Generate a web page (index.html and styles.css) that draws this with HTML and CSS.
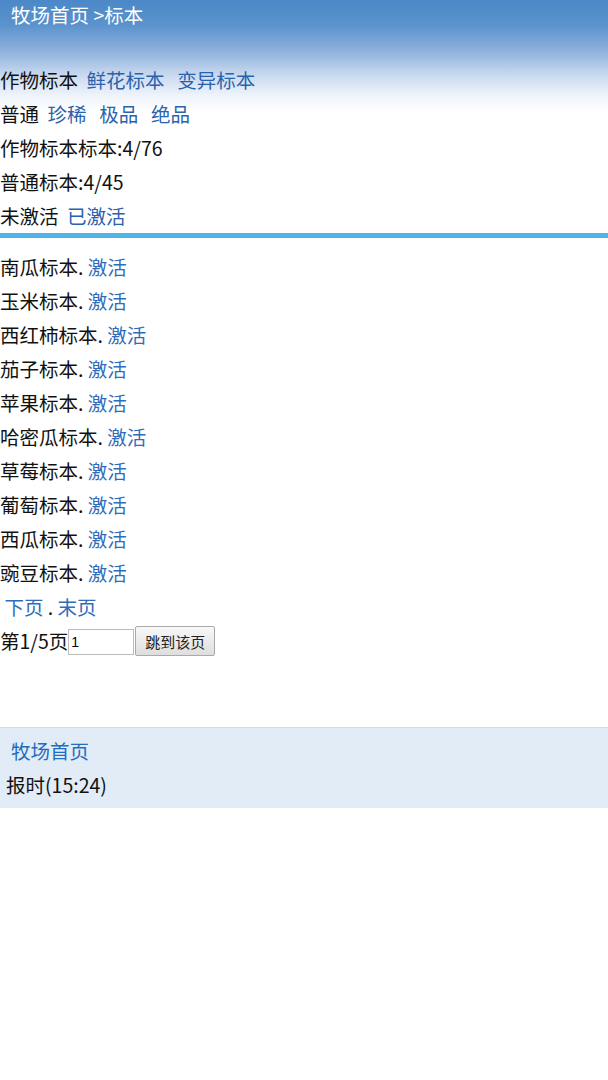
FILE: index.html
```html
<!DOCTYPE html>
<html lang="zh-CN">
<head>
    <meta charset="UTF-8">
    <meta name="viewport" content="width=device-width, initial-scale=1.0">
    <title>标本</title>
    <link rel="stylesheet" href="styles.css">
</head>
<body>
    <div class="top">
        <div class="crumb"><a href="#">牧场首页</a> &gt;标本</div>
    </div>
    <div class="tabs">
        <div class="row">作物标本 <a href="#">鲜花标本</a> &nbsp;<a href="#">变异标本</a></div>
        <div class="row">普通 <a href="#">珍稀</a> &nbsp;<a href="#">极品</a> &nbsp;<a href="#">绝品</a></div>
        <div class="row">作物标本标本:4/76</div>
        <div class="row">普通标本:4/45</div>
        <div class="row">未激活 <a href="#">已激活</a></div>
    </div>
    <div class="line"></div>
    <div class="list">
        <div class="row">南瓜标本. <a href="#">激活</a></div>
        <div class="row">玉米标本. <a href="#">激活</a></div>
        <div class="row">西红柿标本. <a href="#">激活</a></div>
        <div class="row">茄子标本. <a href="#">激活</a></div>
        <div class="row">苹果标本. <a href="#">激活</a></div>
        <div class="row">哈密瓜标本. <a href="#">激活</a></div>
        <div class="row">草莓标本. <a href="#">激活</a></div>
        <div class="row">葡萄标本. <a href="#">激活</a></div>
        <div class="row">西瓜标本. <a href="#">激活</a></div>
        <div class="row">豌豆标本. <a href="#">激活</a></div>
        <div class="row pager">&nbsp;<a href="#">下页</a> . <a href="#">末页</a></div>
        <form class="row jump">第1/5页<input type="text" value="1" class="page-input"><button type="button" class="page-btn">跳到该页</button></form>
    </div>
    <div class="foot">
        <div class="foot-link"><a href="#">牧场首页</a></div>
        <div class="foot-time">报时(15:24)</div>
    </div>
</body>
</html>
```
FILE: styles.css
```css
body{
    margin: 0;
    font-family: "Noto Sans CJK SC", "Noto Sans", sans-serif;
    font-size: 19.5px;
    color: #111;
    background: #fff linear-gradient(to bottom, #4c87c8 0px, #5a93cc 25px, #8cb0dc 50px, #c8d9ef 75px, #eef3fb 95px, #fff 112px) no-repeat;
    background-size: 100% 120px;
}
a{
    color: #2b62ad;
    text-decoration: none;
}
.top{
    height: 63px;
}
.crumb{
    padding: 0 11px;
    line-height: 30px;
    color: #fff;
}
.crumb a{
    color: #fff;
}
.row{
    line-height: 34px;
    height: 34px;
    white-space: nowrap;
}
.tabs a{
    margin-left: 4px;
}
.line{
    height: 5px;
    background: #4fb5e8;
    margin: 0 0 12px 0;
}
.list .row a{
    color: #2f6cba;
}
.jump{
    margin: 0;
    display: flex;
    align-items: center;
}
.page-input{
    width: 60px;
    height: 22px;
    margin: 2px 0 0 0;
    padding: 1px 2px;
    border: 1px solid #bbb;
    font-size: 14px;
    font-family: "Liberation Sans", sans-serif;
}
.page-btn{
    margin: 0 0 0 1px;
    height: 30px;
    padding: 0 9px;
    font-size: 15px;
    font-family: "Noto Sans CJK SC", sans-serif;
    color: #222;
    border: 1px solid #aaa;
    border-radius: 2px;
    background: linear-gradient(to bottom, #f8f8f8, #dedede);
}
.foot{
    margin-top: 69px;
    border-top: 1px solid #cfdcec;
    background: #e2ecf7;
    padding: 6px 0 6px 0;
}
.foot-link{
    padding: 0 11px;
    line-height: 34px;
}
.foot-link a{
    color: #1f6dc0;
}
.foot-time{
    padding: 0 6px;
    line-height: 34px;
}
```
